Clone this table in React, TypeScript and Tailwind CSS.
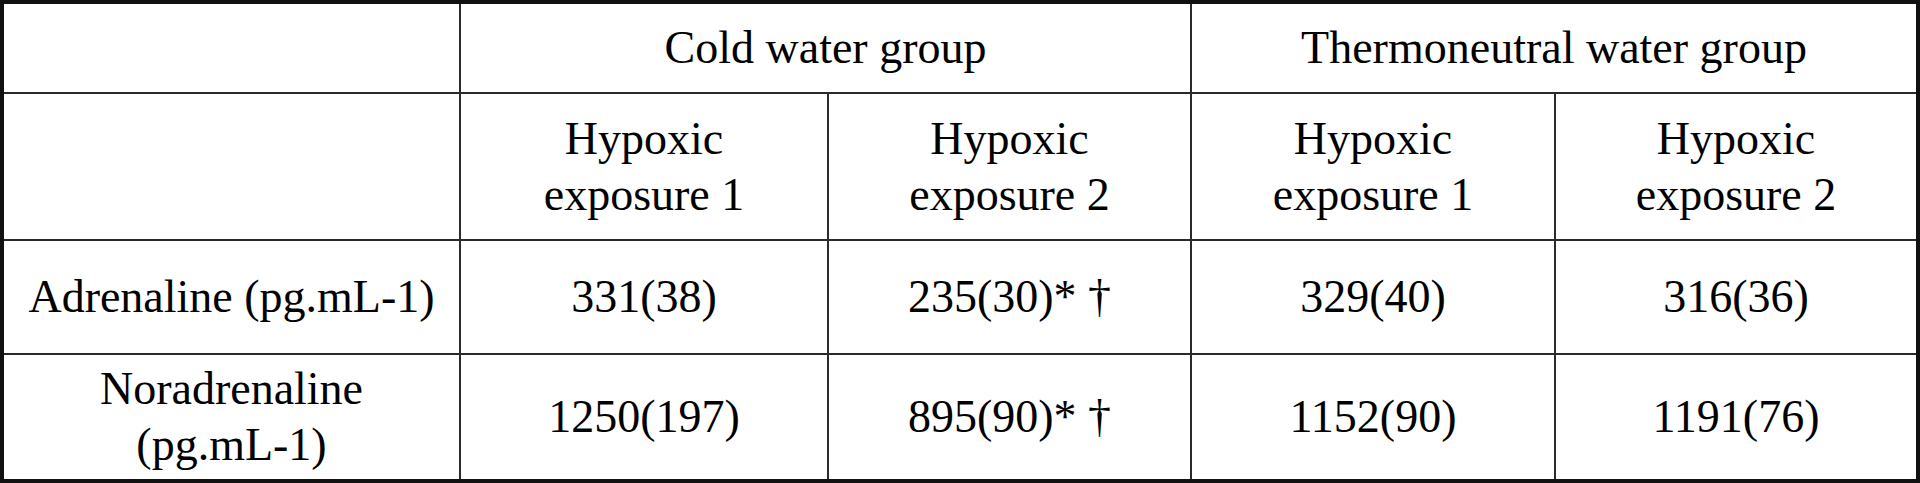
import React from "react";

const base = "flex items-center justify-center text-center border-[#2a2a2a]";

export default function App() {
  const rows = [
    { label: "Adrenaline (pg.mL-1)", vals: ["331(38)", "235(30)* †", "329(40)", "316(36)"] },
    { label: "Noradrenaline\n(pg.mL-1)", vals: ["1250(197)", "895(90)* †", "1152(90)", "1191(76)"] },
  ];
  return (
    <div
      className="w-[1920px] h-[483px] bg-white border-[4px] border-[#111] text-[46px] leading-[56px] text-black"
      style={{ fontFamily: "'Liberation Serif', 'Times New Roman', serif" }}
    >
      <div className="grid h-full w-full grid-cols-[457px_368px_363px_364px_360px] grid-rows-[90px_147px_114px_124px]">
        <div className={base + " border-r-2 border-b-2"}></div>
        <div className={base + " col-span-2 border-r-2 border-b-2"}>Cold water group</div>
        <div className={base + " col-span-2 border-b-2"}>Thermoneutral water group</div>

        <div className={base + " border-r-2 border-b-2"}></div>
        <div className={base + " border-r-2 border-b-2"}>Hypoxic<br />exposure 1</div>
        <div className={base + " border-r-2 border-b-2"}>Hypoxic<br />exposure 2</div>
        <div className={base + " border-r-2 border-b-2"}>Hypoxic<br />exposure 1</div>
        <div className={base + " border-b-2"}>Hypoxic<br />exposure 2</div>

        {rows.map((r, ri) => {
          const bb = ri === 0 ? " border-b-2" : "";
          return (
            <React.Fragment key={r.label}>
              <div className={base + " whitespace-pre-line border-r-2" + bb}>{r.label}</div>
              {r.vals.map((v, i) => (
                <div key={i} className={base + (i < 3 ? " border-r-2" : "") + bb}>{v}</div>
              ))}
            </React.Fragment>
          );
        })}
      </div>
    </div>
  );
}
